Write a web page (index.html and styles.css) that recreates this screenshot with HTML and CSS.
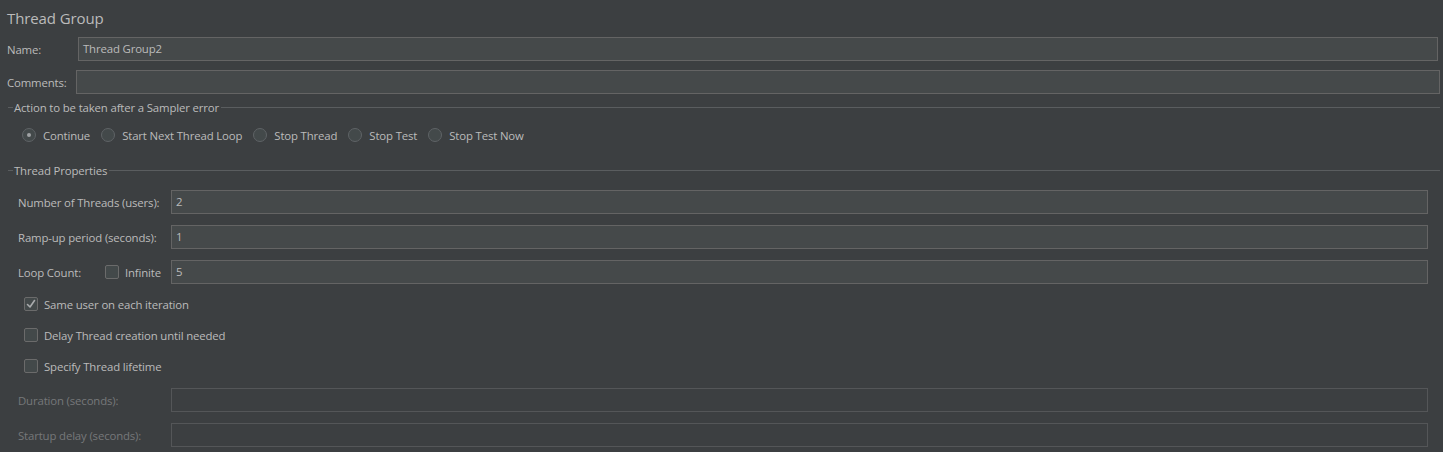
FILE: index.html
```html
<!DOCTYPE html>
<html lang="en">
<head>
<meta charset="utf-8">
<title>Thread Group</title>
<link rel="stylesheet" href="styles.css">
</head>
<body>
<div class="panel">
  <div class="title">Thread Group</div>

  <div class="row row-name">
    <label class="lbl lbl-name">Name:</label>
    <div class="field">Thread Group2</div>
  </div>

  <div class="row row-comments">
    <label class="lbl lbl-comments">Comments:</label>
    <div class="field"></div>
  </div>

  <div class="group-header gh-action">
    <span class="gh-line-start"></span>
    <span class="gh-text">Action to be taken after a Sampler error</span>
    <span class="gh-line"></span>
  </div>

  <div class="radio-row">
    <div class="radio-item"><span class="radio selected"></span><span>Continue</span></div>
    <div class="radio-item"><span class="radio"></span><span>Start Next Thread Loop</span></div>
    <div class="radio-item"><span class="radio"></span><span>Stop Thread</span></div>
    <div class="radio-item"><span class="radio"></span><span>Stop Test</span></div>
    <div class="radio-item"><span class="radio"></span><span>Stop Test Now</span></div>
  </div>

  <div class="group-header gh-props">
    <span class="gh-line-start"></span>
    <span class="gh-text">Thread Properties</span>
    <span class="gh-line"></span>
  </div>

  <div class="prop-row first">
    <label class="prop-lbl">Number of Threads (users):</label>
    <div class="field">2</div>
  </div>
  <div class="prop-row">
    <label class="prop-lbl">Ramp-up period (seconds):</label>
    <div class="field">1</div>
  </div>
  <div class="prop-row">
    <div class="prop-lbl loop-lbl">
      <span class="loop-text">Loop Count:</span>
      <span class="check"></span>
      <span class="infinite">Infinite</span>
    </div>
    <div class="field">5</div>
  </div>

  <div class="check-row first">
    <span class="check checked"><svg width="12" height="12" viewBox="0 0 12 12"><polyline points="2.5,6.5 5,9 9.5,2.5" fill="none" stroke="#a9abad" stroke-width="1.6" stroke-linecap="round" stroke-linejoin="round"/></svg></span>
    <span>Same user on each iteration</span>
  </div>
  <div class="check-row">
    <span class="check"></span>
    <span>Delay Thread creation until needed</span>
  </div>
  <div class="check-row">
    <span class="check"></span>
    <span>Specify Thread lifetime</span>
  </div>

  <div class="prop-row disabled after-checks">
    <label class="prop-lbl">Duration (seconds):</label>
    <div class="field"></div>
  </div>
  <div class="prop-row disabled">
    <label class="prop-lbl">Startup delay (seconds):</label>
    <div class="field"></div>
  </div>
</div>
</body>
</html>
```

FILE: styles.css
```css
* { box-sizing: border-box; }

html, body {
  margin: 0;
  padding: 0;
  background: #3c3f41;
}

body {
  width: 1443px;
  height: 452px;
  overflow: hidden;
  font-family: "Open Sans", "Noto Sans", sans-serif;
  font-size: 11.4px;
  letter-spacing: -0.15px;
  color: #bbbbbb;
}

.panel {
  display: flex;
  flex-direction: column;
}

.title {
  height: 37px;
  line-height: 36px;
  padding-left: 7px;
  font-size: 15px;
  letter-spacing: -0.1px;
  color: #bbbbbb;
}

.row {
  display: flex;
  align-items: center;
  height: 24px;
}

.row-name {
  padding: 0 5px 0 7px;
}

.row-comments {
  margin-top: 9px;
  padding: 0 3px 0 7px;
}

.lbl-name { width: 71px; flex: none; }
.lbl-comments { width: 69px; flex: none; }

.field {
  flex: 1;
  height: 24px;
  background: #45494a;
  border: 1px solid #646464;
  padding: 0 4px;
  line-height: 22px;
  color: #bbbbbb;
  white-space: nowrap;
}

.group-header {
  display: flex;
  align-items: center;
  height: 14px;
  padding-left: 8px;
  padding-right: 3px;
}

.gh-action { margin-top: 6px; }
.gh-props { margin-top: 17px; }

.gh-line-start {
  width: 5px;
  height: 1px;
  background: #5a5d5f;
  flex: none;
}

.gh-text {
  padding: 0 2px 0 1px;
  white-space: nowrap;
}

.gh-line {
  flex: 1;
  height: 1px;
  background: #5a5d5f;
}

.radio-row {
  display: flex;
  align-items: center;
  height: 22px;
  margin-top: 10px;
  padding-left: 22px;
}

.radio-item {
  display: flex;
  align-items: center;
  margin-right: 11px;
  white-space: nowrap;
}

.radio {
  width: 14px;
  height: 14px;
  border-radius: 50%;
  border: 1px solid #5f6366;
  background: #43494a;
  margin-right: 7px;
  display: flex;
  align-items: center;
  justify-content: center;
  flex: none;
}

.radio.selected::after {
  content: "";
  width: 4px;
  height: 4px;
  border-radius: 50%;
  background: #a0a2a4;
}

.prop-row {
  display: flex;
  align-items: center;
  height: 24px;
  margin-top: 11px;
  padding: 0 15px 0 18px;
}

.prop-row.first { margin-top: 13px; }
.prop-row.after-checks { margin-top: 12px; }

.prop-lbl {
  width: 153px;
  flex: none;
  white-space: nowrap;
}

.loop-lbl {
  display: flex;
  align-items: center;
}

.loop-text { width: 87px; flex: none; }

.check {
  width: 14px;
  height: 14px;
  border: 1px solid #6b6b6b;
  background: #43494a;
  border-radius: 2px;
  flex: none;
  display: flex;
  align-items: center;
  justify-content: center;
}

.infinite { margin-left: 6px; }

.check-row {
  display: flex;
  align-items: center;
  height: 20px;
  margin-top: 11px;
  padding-left: 24px;
}

.check-row.first { margin-top: 10px; }

.check-row .check { margin-right: 6px; }

.prop-row.disabled .prop-lbl { color: #76787a; }

.prop-row.disabled .field {
  background: #3c3f41;
  border-color: #545658;
}
```
